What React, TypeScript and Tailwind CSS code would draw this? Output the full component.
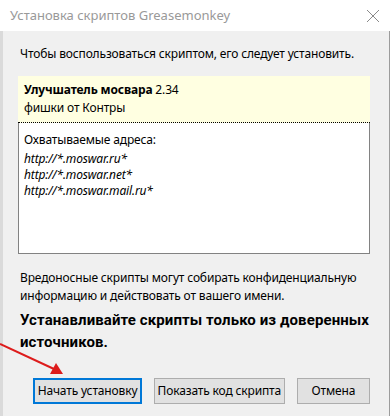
import React from 'react';

const urls = ['http://*.moswar.ru*', 'http://*.moswar.net*', 'http://*.moswar.mail.ru*'];

const App: React.FC = () => {
  return (
    <div className="relative w-[390px] h-[416px] overflow-hidden bg-[#f0f0f0] font-['Noto_Sans',sans-serif] text-[12px] text-black flex flex-col">
      {/* Title bar */}
      <div className="h-[31px] bg-white flex items-center justify-between pl-[10px] pr-[10px] shrink-0">
        <span className="text-[13px] text-[#999999]">Установка скриптов Greasemonkey</span>
        <svg width="14" height="14" viewBox="0 0 14 14" className="text-[#8a8a8a]">
          <path d="M1 1 L13 13 M13 1 L1 13" stroke="currentColor" strokeWidth="1" fill="none" />
        </svg>
      </div>

      {/* Body */}
      <div className="flex-1 flex flex-col border-l-[3px] border-l-[#dadada] border-r border-r-[#9c9c9c] pl-[15px] pr-[19px] tracking-[-0.15px]">
        <p className="pt-[14px] pl-[2px] leading-[18px]">Чтобы воспользоваться скриптом, его следует установить.</p>

        <div className="mt-[13px] bg-[#ffffe1] px-[6px] pt-[5px] pb-[5px] leading-[18px] border-b border-dotted border-black">
          <div>
            <span className="font-bold">Улучшатель мосвара</span> 2.34
          </div>
          <div>фишки от Контры</div>
        </div>

        <div className="h-[131px] bg-white border-x border-b border-[#828282] px-[5px] pt-[8px]">
          <div className="leading-[18px]">Охватываемые адреса:</div>
          <div className="mt-[2px] flex flex-col">
            {urls.map((u) => (
              <span key={u} className="italic leading-[16px]">{u}</span>
            ))}
          </div>
        </div>

        <p className="mt-[15px] pl-[2px] leading-[18px]">
          Вредоносные скрипты могут собирать конфиденциальную
          <br />
          информацию и действовать от вашего имени.
        </p>

        <p className="mt-[4px] pl-[2px] font-['Roboto',sans-serif] text-[15px] font-bold leading-[22px] tracking-[0.1px] whitespace-nowrap">
          Устанавливайте скрипты только из доверенных
          <br />
          источников.
        </p>

        <div className="mt-[25px] flex gap-[12px] pl-[15px]">
          <button className="w-[110px] h-[26px] bg-[#e1e1e1] border-2 border-[#0078d7] whitespace-nowrap">Начать установку</button>
          <button className="w-[132px] h-[26px] bg-[#e1e1e1] border border-[#adadad] whitespace-nowrap">Показать код скрипта</button>
          <button className="w-[74px] h-[26px] bg-[#e1e1e1] border border-[#adadad]">Отмена</button>
        </div>
      </div>

      {/* Red annotation arrow */}
      <svg className="absolute left-0 top-[340px]" width="70" height="40" viewBox="0 0 70 40">
        <line x1="0" y1="4" x2="54" y2="29" stroke="#dd1c1c" strokeWidth="2" />
        <polygon points="63,34 50,34 56,23" fill="#dd1c1c" />
      </svg>
    </div>
  );
};

export default App;
